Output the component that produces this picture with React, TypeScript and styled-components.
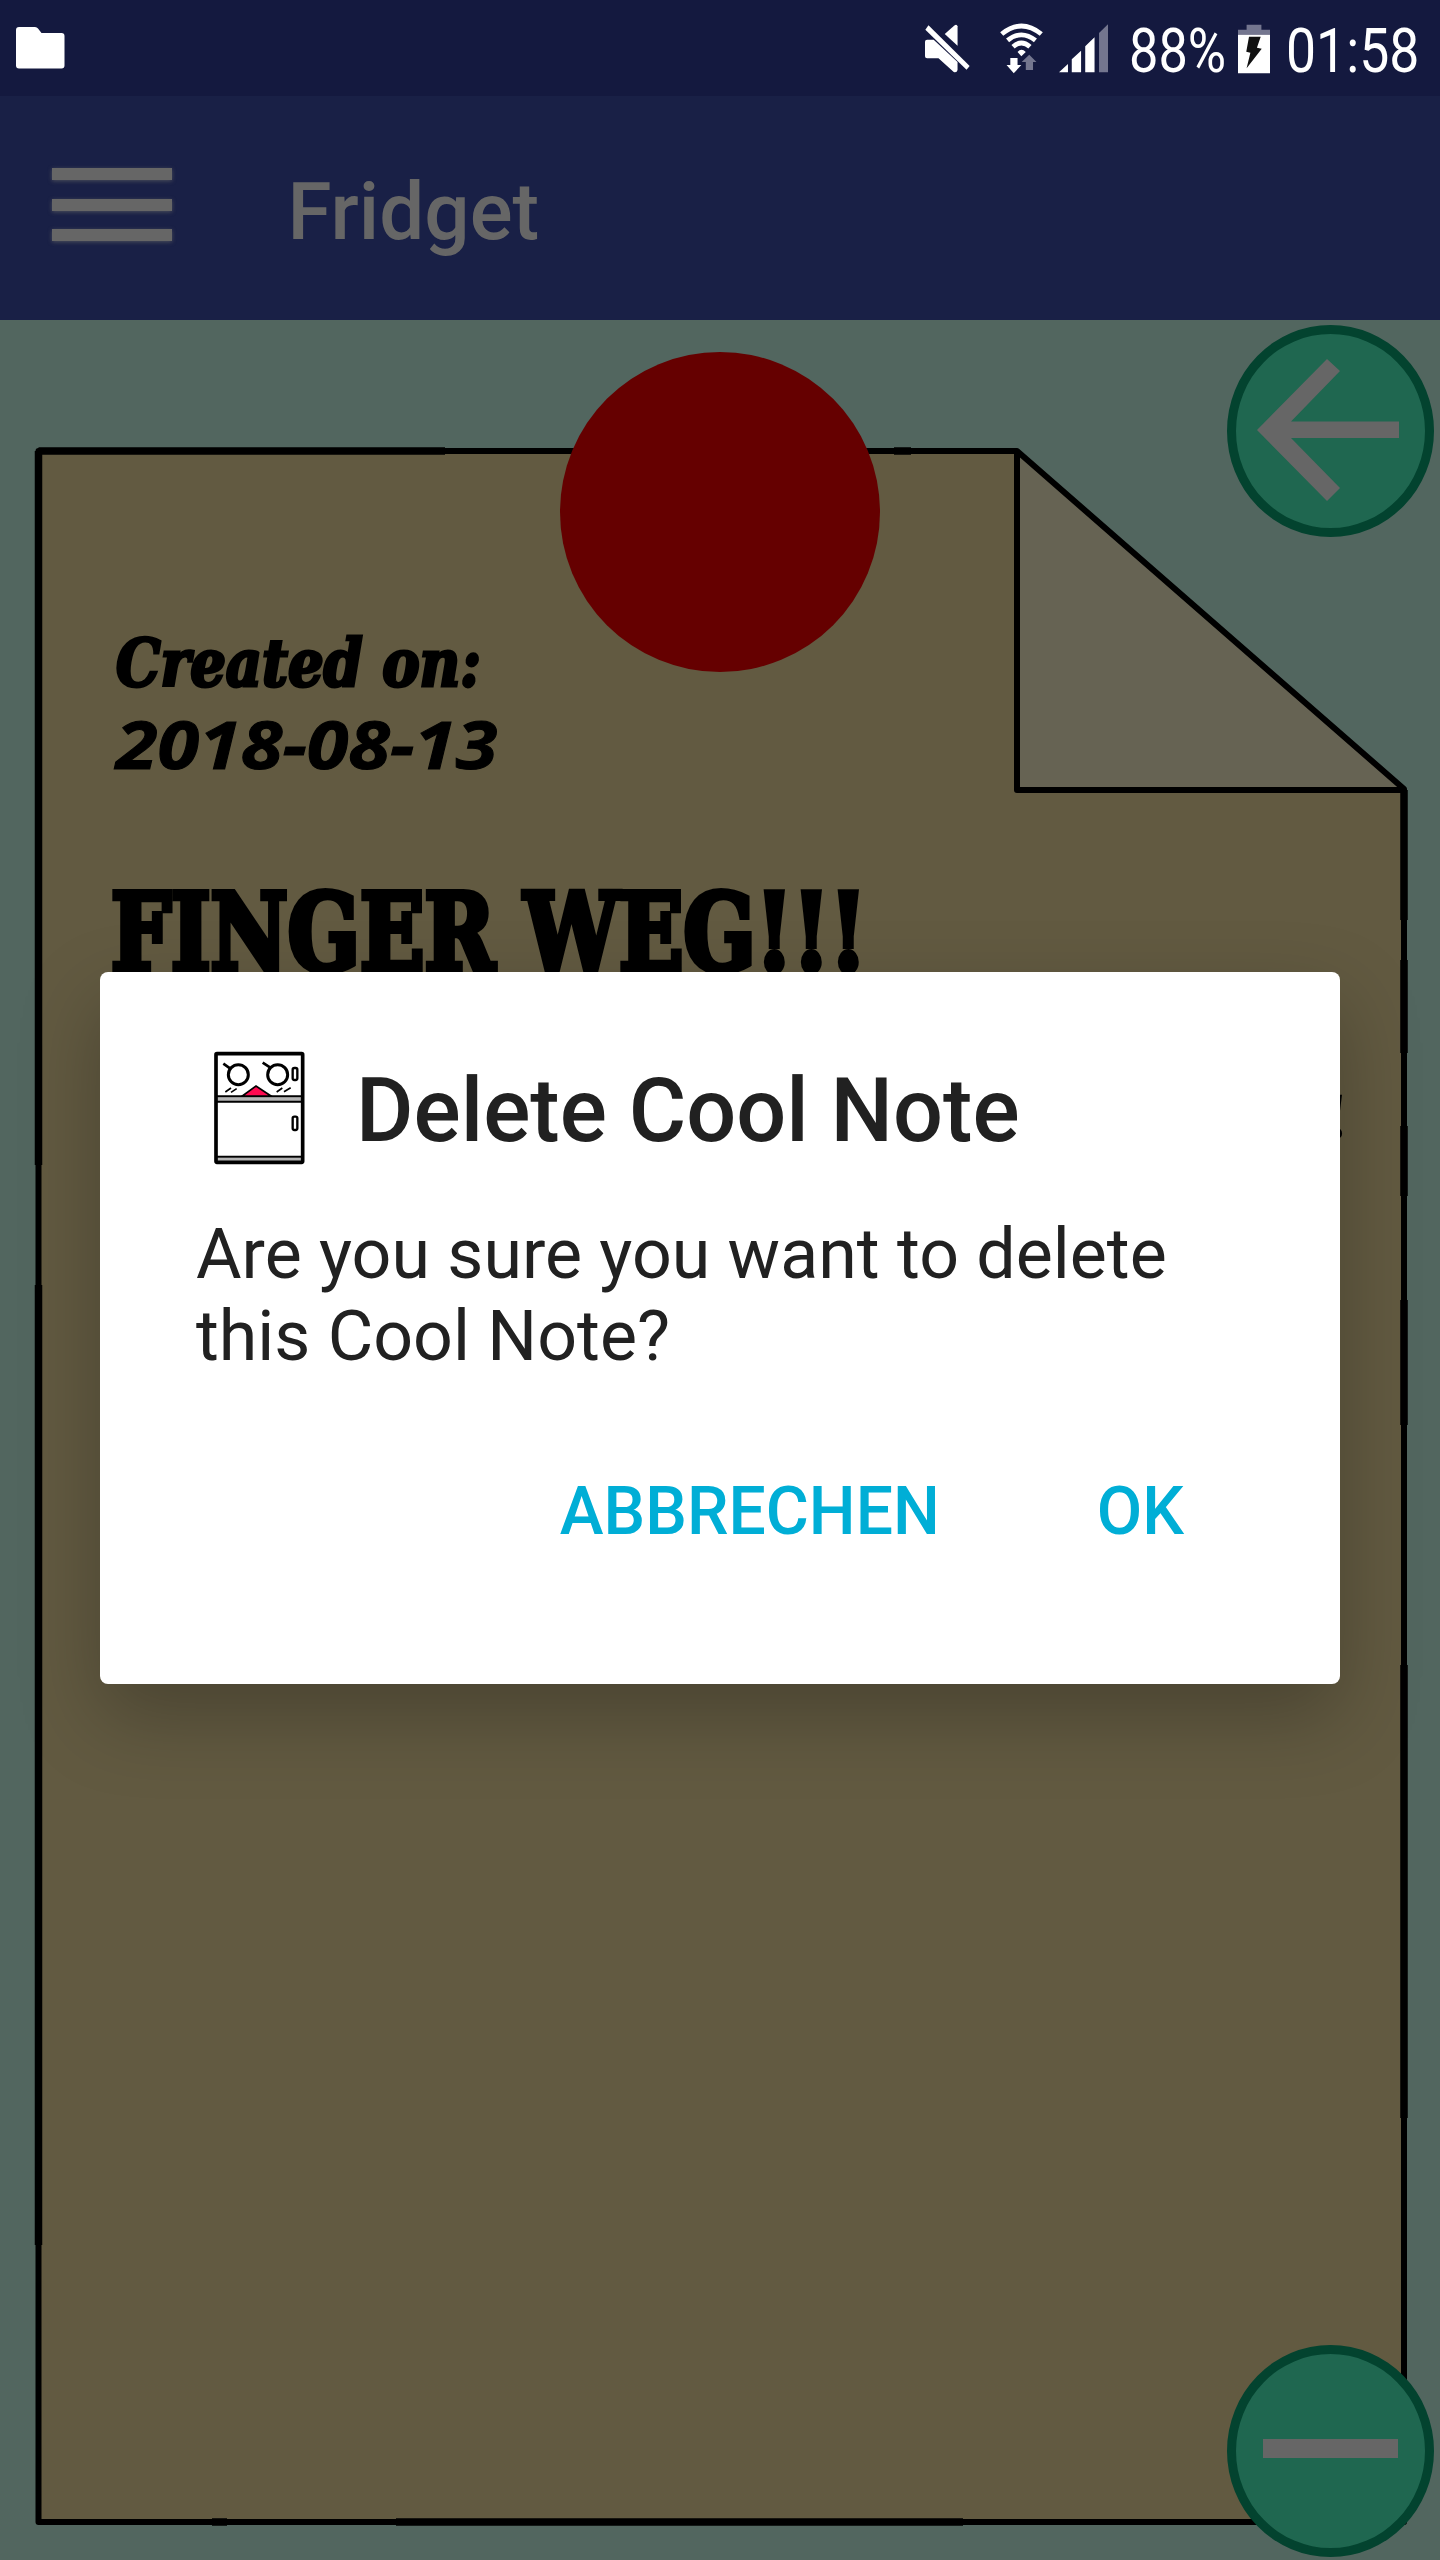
import React, { useLayoutEffect, useRef, useState } from "react";
import styled, { createGlobalStyle } from "styled-components";

const GlobalStyle = createGlobalStyle`
  html, body { margin: 0; padding: 0; }
  body { font-family: Roboto, "Noto Sans", sans-serif; background: #52665f; }
  * { box-sizing: border-box; }
`;

const Screen = styled.div`
  position: relative;
  display: flex;
  flex-direction: column;
  width: 1440px;
  height: 2560px;
  overflow: hidden;
  background: #52665f;
`;

const StatusBar = styled.header`
  display: flex;
  align-items: center;
  height: 96px;
  padding: 0 21px 0 16px;
  background: #14193f;
  color: #fff;
`;

const Spacer = styled.div`
  flex: 1;
`;

const Glyph = styled.svg<{ $w: number; $h?: number; $gap?: number }>`
  display: block;
  flex: none;
  width: ${(p) => p.$w}px;
  height: ${(p) => p.$h ?? 52}px;
  margin-right: ${(p) => p.$gap ?? 0}px;
`;

const StatusText = styled.div<{ $gap?: number }>`
  font-size: 62px;
  line-height: 70px;
  padding-top: 6px;
  margin-right: ${(p) => p.$gap ?? 0}px;
`;

const AppBar = styled.nav`
  display: flex;
  align-items: center;
  height: 224px;
  padding-left: 52px;
  background: #192046;
`;

const MenuButton = styled.div`
  display: flex;
  flex-direction: column;
  justify-content: space-between;
  width: 120px;
  height: 73px;
  margin: 0 115.500px 7px 0;
`;

const MenuBar = styled.span`
  height: 12px;
  background: #666;
  box-shadow: 0 1px 4px #666666b0;
`;

const AppTitle = styled.h1`
  margin: 0;
  padding-top: 8px;
  font-size: 80px;
  line-height: 94px;
  font-weight: 500;
  color: #666;
`;

const Board = styled.main`
  position: relative;
  flex: 1;
`;

const Paper = styled.svg`
  position: absolute;
  inset: 0;
  width: 1440px;
  height: 2240px;
`;

const Pin = styled.div`
  position: absolute;
  left: 560px;
  top: 32px;
  width: 320px;
  height: 320px;
  border-radius: 50%;
  background: #650000;
`;

const NoteBody = styled.article`
  position: relative;
  display: flex;
  flex-direction: column;
  padding: 302px 98px 0 111px;
  color: #000;
  font-family: "DejaVu Serif Condensed", "DejaVu Serif", serif;
  font-weight: 700;
`;

const NoteDate = styled.div`
  padding-left: 5px;
  font-style: italic;
  font-size: 65px;
  line-height: 82px;
  -webkit-text-stroke: 3px #000;
`;

const DateDigits = styled.div`
  padding-left: 5px;
  margin-top: -2px;
  font-family: "Open Sans", "Noto Sans", sans-serif;
  font-style: italic;
  font-weight: 700;
  font-size: 67px;
  line-height: 82px;
  -webkit-text-stroke: 1px #000;
`;

const NoteTitle = styled.h2`
  margin: 79px 0 0;
  font-size: 107px;
  line-height: 140px;
  -webkit-text-stroke: 6px #000;
`;

const NoteText = styled.p`
  align-self: flex-end;
  margin: 73px -7px 0 0;
  font-size: 60px;
  line-height: 82px;
`;

const RoundButton = styled.button<{ $top: number }>`
  position: absolute;
  left: 1227px;
  top: ${(p) => p.$top}px;
  width: 207px;
  height: 212px;
  padding: 0;
  border: 9px solid #03432f;
  border-radius: 50%;
  background: #1f6750;
`;

const RoundIcon = styled.svg`
  display: block;
  width: 189px;
  height: 194px;
`;

const Overlay = styled.div`
  position: absolute;
  inset: 0;
  display: flex;
  flex-direction: column;
  align-items: center;
  padding-top: 972px;
`;

const Dialog = styled.section`
  display: flex;
  flex-direction: column;
  width: 1240px;
  height: 712px;
  padding: 58px 96px 0 96px;
  border-radius: 8px;
  background: #fff;
  color: #212121;
  box-shadow: 0 32px 80px rgba(0, 0, 0, 0.25);
`;

const DialogHeader = styled.div`
  display: flex;
  align-items: center;
  height: 150px;
  margin-left: -6px;
`;

const DialogTitle = styled.h2`
  margin: 0;
  padding: 12px 0 0 26px;
  font-size: 88.100px;
  line-height: 104px;
  font-weight: 500;
`;

const Message = styled.p`
  margin: 33px 0 0;
  font-size: 69.900px;
  line-height: 82px;
`;

const Actions = styled.div`
  display: flex;
  justify-content: flex-end;
  gap: 157px;
  margin-top: 96px;
  padding-right: 60px;
`;

const Action = styled.button`
  border: 0;
  padding: 0;
  background: none;
  font: 500 66px/78px Roboto, sans-serif;
  color: #00aed6;
`;

const FitBox = styled.span<{ $w: number }>`
  display: block;
  width: ${(p) => p.$w}px;
  white-space: pre;
`;

const FitInner = styled.span`
  display: inline-block;
  transform-origin: 0 50%;
`;

/* Squeezes or stretches a line of text to a given width. */
function Fit({ width, children }: { width: number; children: React.ReactNode }) {
  const ref = useRef<HTMLSpanElement>(null);
  const [scale, setScale] = useState(1);
  useLayoutEffect(() => {
    if (ref.current) setScale(width / ref.current.offsetWidth);
  }, [width]);
  return (
    <FitBox $w={width}>
      <FitInner ref={ref} style={{ transform: `scaleX(${scale})` }}>
        {children}
      </FitInner>
    </FitBox>
  );
}

function FolderIcon() {
  return (
    <Glyph $w={49} $h={42} viewBox="0 0 49 42">
      <path fill="#fff" d="M3 0H19Q21 0 22 1.5L25.500 6H45.500Q48.500 6 48.500 9V38.500Q48.500 41.500 45.500 41.500H3Q0 41.500 0 38.500V3Q0 0 3 0Z" />
    </Glyph>
  );
}

function MuteIcon() {
  return (
    <Glyph $w={45} $gap={30} viewBox="73 67 130 156" preserveAspectRatio="none">
      <g fill="#fff">
        <path d="M79 120H98L167 187V211Q165 220 156 217L112 176H79Q73 176 73 170V126Q73 120 79 120Z" />
        <path d="M130 103L157 78Q165 72 167 80V138Z" />
        <path d="M83 77L202 199L193 210L74 90Z" />
      </g>
    </Glyph>
  );
}

function WifiIcon() {
  return (
    <Glyph $w={43} $gap={16} viewBox="290 67 125 156" preserveAspectRatio="none">
      <g fill="none" stroke="#fff" strokeWidth="14">
        <path d="M295 103Q352 55 410 103" />
        <path d="M312 122Q352 89 393 122" />
        <path d="M328 141Q352 119 377 141" />
      </g>
      <path fill="#fff" d="M341 157Q352 143 365 157L352 170ZM320 175H341V196H352L330 221L309 196H320Z" />
      <path fill="#74768f" d="M375 165L396 187H386V211H365V187H353Z" />
    </Glyph>
  );
}

function SignalIcon() {
  return (
    <Glyph $w={49} $gap={21} viewBox="462 67 142 156" preserveAspectRatio="none">
      <path fill="#fff" d="M462 218H488V193ZM499 218H526V153L499 179ZM538 218H565V113L538 140Z" />
      <path fill="#74768f" d="M578 218H604V74L578 100Z" />
    </Glyph>
  );
}

function BatteryIcon() {
  return (
    <Glyph $w={32} $gap={16} viewBox="981 67 93 156" preserveAspectRatio="none">
      <path fill="#74768f" d="M1006 75H1049V90H1074V105H981V90H1006Z" />
      <path fill="#fff" d="M981 105H1074V221H981Z" />
      <path fill="#111" d="M1013 111H1047L1036 144L1050 147L1006 206L1017 159L1005 156Z" />
    </Glyph>
  );
}

function FridgeIcon() {
  return (
    <Glyph $w={140} $h={150} viewBox="0 0 420 450">
      <g fill="none" stroke="#000">
        <path fill="#b4b4b4" stroke="none" d="M80 202H336V214H80ZM80 383H336V393H80Z" />
        <rect x="78" y="71" width="260" height="326" rx="3" strokeWidth="11" />
        <path strokeWidth="6" d="M80 199H336M80 215H336M80 380H336" />
        <circle cx="145" cy="134" r="30" strokeWidth="9" />
        <circle cx="263" cy="134" r="30" strokeWidth="9" />
        <path strokeWidth="8" d="M100 101L120 115M218 98L240 112" />
        <path strokeWidth="5" d="M106 186L123 174M123 187L140 176M260 186L277 174M282 185L302 173" />
        <rect x="308" y="114" width="14" height="36" rx="5" strokeWidth="7" />
        <rect x="308" y="260" width="14" height="40" rx="5" strokeWidth="7" />
        <path fill="#ff0a50" strokeWidth="5" d="M157 198L198 168L243 198Z" />
      </g>
    </Glyph>
  );
}

function NotePaper() {
  return (
    <Paper viewBox="0 320 1440 2240">
      <path fill="#625a41" d="M38.500 451H1017V790H1404V2522H38.500Z" />
      <path fill="#666353" d="M1017 451V790H1404Z" />
      <g fill="none" stroke="#000" strokeLinejoin="round">
        <path strokeWidth="6" d="M38.500 451H1017L1404 789V2522H38.500ZM1017 451V790H1404" />
        <path strokeWidth="7.500" d="M38.500 451V1165M38.500 1285V2245M38.500 451H445M894 451H911M1404 790V920M1404 960V1053M1404 1126V1196M1404 1300V1425M1404 1665V2118M396 2522H963M212 2522H227" />
      </g>
    </Paper>
  );
}

export default function App() {
  return (
    <Screen>
      <GlobalStyle />
      <StatusBar>
        <FolderIcon />
        <Spacer />
        <MuteIcon />
        <WifiIcon />
        <SignalIcon />
        <StatusText $gap={12}>
          <Fit width={97}>88%</Fit>
        </StatusText>
        <BatteryIcon />
        <StatusText>
          <Fit width={133}>01:58</Fit>
        </StatusText>
      </StatusBar>
      <AppBar>
        <MenuButton>
          <MenuBar />
          <MenuBar />
          <MenuBar />
        </MenuButton>
        <AppTitle>Fridget</AppTitle>
      </AppBar>
      <Board>
        <NotePaper />
        <Pin />
        <NoteBody>
          <NoteDate>
            <Fit width={365}>Created on:</Fit>
          </NoteDate>
          <DateDigits>
            <Fit width={381}>2018-08-13</Fit>
          </DateDigits>
          <NoteTitle>
            <Fit width={756}>FINGER WEG!!!</Fit>
          </NoteTitle>
          <NoteText>!</NoteText>
        </NoteBody>
        <RoundButton $top={5} aria-label="Back">
          <RoundIcon viewBox="1236 334 189 194">
            <path fill="#666" d="M1257 430L1327 359L1340 371L1291 421.500H1399V438H1291L1340 488L1327 501Z" />
          </RoundIcon>
        </RoundButton>
        <RoundButton $top={2025} aria-label="Remove">
          <RoundIcon viewBox="1236 2354 189 194">
            <path fill="#666" d="M1263 2439H1398V2458H1263Z" />
          </RoundIcon>
        </RoundButton>
      </Board>
      <Overlay>
        <Dialog role="dialog">
          <DialogHeader>
            <FridgeIcon />
            <DialogTitle>Delete Cool Note</DialogTitle>
          </DialogHeader>
          <Message>
            Are you sure you want to delete
            <br />
            this Cool Note?
          </Message>
          <Actions>
            <Action>ABBRECHEN</Action>
            <Action>OK</Action>
          </Actions>
        </Dialog>
      </Overlay>
    </Screen>
  );
}
